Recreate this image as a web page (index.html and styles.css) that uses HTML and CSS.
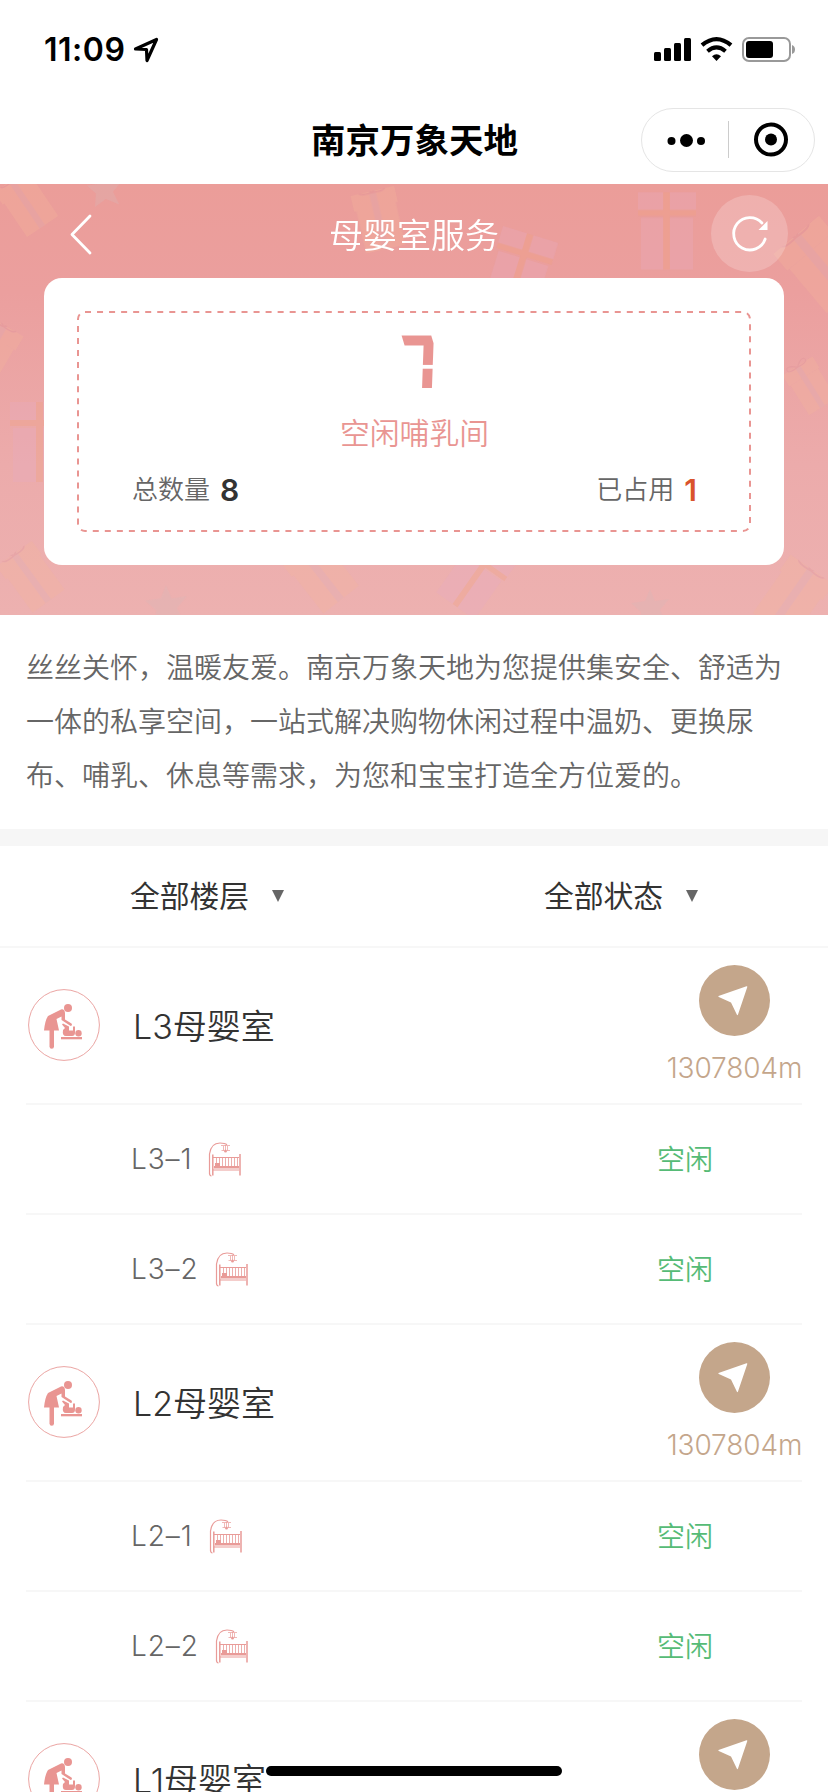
FILE: index.html
```html
<!DOCTYPE html>
<html lang="zh-CN">
<head>
<meta charset="utf-8">
<title>南京万象天地</title>
<link rel="stylesheet" href="styles.css">
</head>
<body>
<svg class="defs" width="0" height="0" aria-hidden="true">
  <symbol id="care" viewBox="0 0 72 72">
    <circle cx="36" cy="36" r="35.4" fill="none" stroke="#eba5a3"/>
    <g fill="#e99592">
      <circle cx="40" cy="19" r="4"/>
      <path d="M33 20.500q3.500-.8 4 3.500v6.500l6.500 4q1.300 2-.8 2.500l-9.200-6v-3.500l-5 2.500 2.500 11.500H16q1-10 4-14.500z"/>
      <path d="M21.500 41h4.500v16.500a2.200 2.200 0 0 1-4.500 0z"/>
      <path d="M34 35.500l1-1 6 3v4h4v-4h2v6q0 3.500-3 3.500h-6q-4 0-3-6l2-2z"/>
      <circle cx="50.500" cy="44.300" r="3.200"/>
      <path d="M33 48h21v2.300H33z"/>
    </g>
  </symbol>
  <symbol id="crib" viewBox="0 0 34 36">
    <g fill="none" stroke="#e99b98">
      <path d="M1.500 33V13Q3 2 12 2q5 0 7 1.800M3.500 35Q1.500 35 1.500 32" stroke-width="1.200"/>
      <path d="M13 4.500h9M15.500 5v5M19.500 5v5M13.500 9.500h2M19.500 9.500h2.500M17.500 4v5" stroke-width=".7"/>
      <path d="M4.800 13.500v21M32 13v21.500" stroke-width="1.500"/>
      <path d="M5 16.500h26M5 29h26" stroke-width="1"/>
      <path d="M8.500 17v8M11.500 17v8M14.500 17v8M17.500 17v8M20.500 17v8M23.500 17v8M26.500 17v8M29.500 17v8" stroke-width=".8"/>
    </g>
    <path d="M6 25h25v2.500H6zM7 22h5v3H7z" fill="#e99b98"/>
    <circle cx="17.500" cy="10" r="1.500" fill="#e99b98"/>
  </symbol>
  <symbol id="nav" viewBox="0 0 71 71">
    <circle cx="35.500" cy="35.500" r="35.500" fill="#c4a68b"/>
    <path d="M19.500 31L47.500 21.200q1-.2.8.800L39 49.500q-.6 1.300-1.200 0L32 37.500 19.800 32q-.8-.5-.3-1z" fill="#fff"/>
  </symbol>
  <symbol id="gift" viewBox="0 0 60 80">
    <path d="M0 0h60v22H0zM3 26h54v54H3z" fill="#e6abc2"/>
    <path d="M26 0h7v80h-7zM0 18h60v6H0z" fill="#f0a17c"/>
  </symbol>
  <symbol id="parcel" viewBox="0 0 60 80">
    <path d="M0 0h60v22H0zM3 22h54v58H3z" fill="#f3b49c"/>
    <path d="M25 0h9v80h-9z" fill="#dfb0b2"/>
    <path d="M29 2q-16-14-18-4 0 6 18 4 16-14 18-4 0 6-18 4" fill="none" stroke="#dd8f98" stroke-width="2"/>
  </symbol>
  <symbol id="star" viewBox="0 0 40 40">
    <path d="M20 1l5 12 14-2-9 11 7 14-15-6-12 9 1-15-10-9 14-2z" fill="#d8b9ba"/>
  </symbol>
</svg>

<header class="top">
  <div class="status">
    <span class="time">11:09</span>
    <svg class="loc" width="26" height="26" viewBox="0 0 26 26"><path d="M2.500 12L23.500 2.500 14 23.500 13.500 12.500z" fill="none" stroke="#000" stroke-width="3.200" stroke-linejoin="round"/></svg>
    <svg class="signals" width="144" height="28" viewBox="0 0 144 28">
      <rect x="2" y="16" width="7" height="9" rx="1.500"/><rect x="12" y="12" width="7" height="13" rx="1.500"/><rect x="22" y="7" width="7" height="18" rx="1.500"/><rect x="32" y="2" width="7" height="23" rx="1.500"/>
      <g fill="none" stroke="#000"><path d="M50 9.200Q64.500-3 79 9.200" stroke-width="4.200"/><path d="M55.500 15.200Q64.500 7.500 73.500 15.200" stroke-width="4"/></g>
      <path d="M60 20.300q4.500-4 9 0l-4.500 4.700z"/>
      <rect x="91" y="2" width="47" height="23" rx="6" fill="none" stroke="#999" stroke-width="2"/>
      <rect x="94" y="5" width="27" height="17" rx="3"/><path d="M140 9q3 1 3 4.500t-3 4.500z" fill="#999"/>
    </svg>
  </div>
  <div class="titlebar">
    <h1 class="app-title">南京万象天地</h1>
    <div class="capsule">
      <svg width="172" height="62" viewBox="0 0 172 62"><circle cx="29.500" cy="32" r="4"/><circle cx="44.500" cy="31.500" r="6.500"/><circle cx="59" cy="32" r="4"/><path d="M86.500 12v37" stroke="#ccc"/><circle cx="129" cy="30.500" r="15" fill="none" stroke="#000" stroke-width="4"/><circle cx="129" cy="30.500" r="6"/></svg>
    </div>
  </div>
</header>

<section class="banner">
  <svg class="decor" width="828" height="431" viewBox="0 0 828 431" aria-hidden="true">
    <g opacity=".3">
      <use href="#gift" x="638" y="7" width="58" height="80"/>
      <use href="#gift" width="58" height="77" transform="translate(503 42) rotate(17)"/>
      <use href="#parcel" width="42" height="56" transform="translate(-6 8) rotate(-34)"/>
      <use href="#parcel" width="46" height="60" transform="translate(350 12) rotate(-13)"/>
      <use href="#parcel" width="60" height="80" transform="translate(773 70) rotate(-40)"/>
      <use href="#gift" width="60" height="80" x="10" y="218"/>
      <use href="#parcel" width="44" height="60" transform="translate(-4 382) rotate(-36)"/>
      <use href="#parcel" width="44" height="60" transform="translate(-14 130) rotate(30)"/>
      <use href="#parcel" width="50" height="68" transform="translate(280 378) rotate(-38)"/>
      <use href="#gift" width="52" height="70" transform="translate(474 350) rotate(35)"/>
      <use href="#parcel" width="36" height="56" transform="translate(780 188) rotate(-32)"/>
      <use href="#parcel" width="54" height="70" transform="translate(790 370) rotate(35)"/>
      <use href="#star" x="86" y="-12" width="36" height="36"/>
      <use href="#star" x="144" y="400" width="44" height="44"/>
      <use href="#star" x="630" y="404" width="40" height="40"/>
    </g>
  </svg>
  <div class="banner-head">
    <svg class="back" width="26" height="42" viewBox="0 0 26 42"><path d="M22 3L4 21.500 22 40" fill="none" stroke="#fff" stroke-width="2.800" stroke-linecap="round" stroke-linejoin="round"/></svg>
    <h2 class="banner-title">母婴室服务</h2>
    <div class="refresh"><svg width="40" height="40" viewBox="0 0 40 40"><path d="M35.200 25A16.200 16.200 0 1 1 32 9" fill="none" stroke="#fff" stroke-width="2.800" stroke-linecap="round"/><path d="M37.500 7v9H28.500z" fill="#fff"/></svg></div>
  </div>
  <div class="card">
    <div class="summary">
      <svg class="frame" width="674" height="221" viewBox="0 0 674 221"><rect x="1" y="1" width="672" height="219" rx="7" fill="none" stroke="#e99592" stroke-width="2" stroke-dasharray="6 6.040"/></svg>
      <div class="free-count">7</div>
      <div class="free-label">空闲哺乳间</div>
      <div class="totals">
        <span class="total">总数量<b class="num">8</b></span>
        <span class="total">已占用<b class="num used">1</b></span>
      </div>
    </div>
  </div>
</section>

<p class="intro">丝丝关怀，温暖友爱。南京万象天地为您提供集安全、舒适为一体的私享空间，一站式解决购物休闲过程中温奶、更换尿布、哺乳、休息等需求，为您和宝宝打造全方位爱的。</p>

<nav class="filters">
  <div class="filter">全部楼层<i class="caret"></i></div>
  <div class="filter">全部状态<i class="caret"></i></div>
</nav>

<main class="list">
  <div class="room"><svg class="care"><use href="#care"/></svg><h3 class="room-name">L3母婴室</h3><div class="go"><svg class="nav"><use href="#nav"/></svg><span class="dist">1307804m</span></div></div>
  <div class="unit"><span class="unit-name">L3–1</span><svg class="crib"><use href="#crib"/></svg><span class="state">空闲</span></div>
  <div class="unit"><span class="unit-name">L3–2</span><svg class="crib"><use href="#crib"/></svg><span class="state">空闲</span></div>
  <div class="room"><svg class="care"><use href="#care"/></svg><h3 class="room-name">L2母婴室</h3><div class="go"><svg class="nav"><use href="#nav"/></svg><span class="dist">1307804m</span></div></div>
  <div class="unit"><span class="unit-name">L2–1</span><svg class="crib"><use href="#crib"/></svg><span class="state">空闲</span></div>
  <div class="unit"><span class="unit-name">L2–2</span><svg class="crib"><use href="#crib"/></svg><span class="state">空闲</span></div>
  <div class="room"><svg class="care"><use href="#care"/></svg><h3 class="room-name">L1母婴室</h3><div class="go"><svg class="nav"><use href="#nav"/></svg></div></div>
</main>
<div class="home-bar"></div>
</body>
</html>
```

FILE: styles.css
```css
* { box-sizing: border-box; margin: 0; padding: 0; }
html, body { height: 1792px; overflow: hidden; }
body {
  position: relative;
  width: 828px;
  background: #fff;
  color: #333;
  font-family: Inter, "Noto Sans CJK SC", sans-serif;
}
svg { display: block; flex: none; }
.defs { position: absolute; }

.top { height: 184px; display: flex; flex-direction: column; }
.status { height: 100px; display: flex; align-items: center; padding: 0 32px 0 44px; }
.time { font-size: 32px; font-weight: 600; line-height: 40px; letter-spacing: 0.5px; color: #000; width: 89px; white-space: nowrap; }
.signals { margin-left: auto; }
.titlebar { height: 84px; display: grid; grid-template-columns: 1fr auto 1fr; align-items: center; padding: 0 13px 4px 14px; }
.app-title { grid-column: 2; font-family: "Noto Sans CJK SC", sans-serif; font-size: 34.500px; font-weight: 600; line-height: 44px; padding-bottom: 4px; color: #000; }
.capsule { justify-self: end; width: 174px; height: 64px; border: 1px solid #e5e5e5; border-radius: 32px; }

.banner { position: relative; height: 431px; overflow: hidden; background: linear-gradient(#eb9d99, #eb9f9e 25%, #ecabab 65%, #edb1b0); }
.decor { position: absolute; left: 0; top: 0; }
.banner-head { position: relative; height: 94px; display: grid; grid-template-columns: 1fr auto 1fr; align-items: center; padding: 5px 40px 0 68px; }
.banner-title { font-family: "Noto Sans CJK SC", sans-serif; font-size: 34px; font-weight: 350; line-height: 48px; color: #fff; transform: translateX(-14px); }
.refresh { justify-self: end; width: 77px; height: 77px; border-radius: 50%; background: rgba(255,255,255,.2); display: flex; align-items: center; justify-content: center; }
.card { position: relative; width: 740px; height: 287px; margin: 0 44px; padding: 33px; border-radius: 18px; background: #fff; }
.summary { position: relative; height: 221px; padding: 14px 54px 0 55px; display: flex; flex-direction: column; align-items: center; }
.frame { position: absolute; left: 0; top: 0; }
.free-count {
  height: 76px;
  font: 700 72px/76px "DejaVu Sans", sans-serif;
  transform: translateX(11px) skewX(17deg) scaleX(.75);
  background: linear-gradient(180deg, #e99592 52%, #fff 52%, #fff 57%, #e99592 57%);
  -webkit-background-clip: text;
  background-clip: text;
  color: transparent;
}
.free-label { margin-top: 9px; font-family: "Noto Sans CJK SC", sans-serif; font-size: 29.800px; font-weight: 350; line-height: 42px; color: #e99592; }
.totals { align-self: stretch; display: flex; justify-content: space-between; margin-top: 17px; }
.total { display: flex; align-items: center; font-weight: 350; font-size: 26px; line-height: 42px; color: #666; }
.num { margin-left: 10px; font-size: 30px; font-weight: 600; color: #333; }
.used { color: #d9532c; }

.intro { height: 231px; padding: 24px 24px 0 26px; border-bottom: 17px solid #f6f6f6; font-family: "Noto Sans CJK SC", sans-serif; font-size: 28px; font-weight: 350; line-height: 54px; color: #666; }

.filters { height: 102px; display: grid; grid-template-columns: 1fr 1fr; border-bottom: 2px solid #f7f7f7; }
.filter { display: flex; align-items: center; justify-content: center; gap: 23px; font-size: 29.800px; line-height: 42px; color: #333; }
.caret { border: 6px solid transparent; border-top: 12px solid #666; border-bottom: 0; }

.list { padding: 0 26px; }
.room { height: 156.600px; display: flex; border-bottom: 2px solid #f7f7f7; align-items: flex-start; }
.care { width: 72px; height: 72px; margin: 41px 0 0 2px; }
.room-name { margin: 54px 0 0 33px; font-size: 34px; font-weight: 350; line-height: 50px; }
.go { margin-left: auto; width: 135px; padding-top: 17px; display: flex; flex-direction: column; align-items: center; }
.nav { width: 71px; height: 71px; }
.dist { margin-top: 13px; font-size: 28px; font-weight: 300; line-height: 38px; letter-spacing: -0.1px; white-space: nowrap; color: #c4a68b; }
.unit { height: 110.300px; display: flex; align-items: center; padding-left: 105px; border-bottom: 2px solid #f7f7f7; }
.unit-name { font-size: 28px; font-weight: 300; line-height: 40px; letter-spacing: 0.9px; color: #666; }
.crib { width: 34px; height: 36px; margin-left: 16px; }
.state { margin-left: auto; width: 145px; padding-top: 2px; font-size: 28px; line-height: 40px; font-weight: 350; color: #56bb76; }
.home-bar { position: absolute; left: 266px; top: 1766px; width: 296px; height: 10px; border-radius: 5px; background: #000; }
```
